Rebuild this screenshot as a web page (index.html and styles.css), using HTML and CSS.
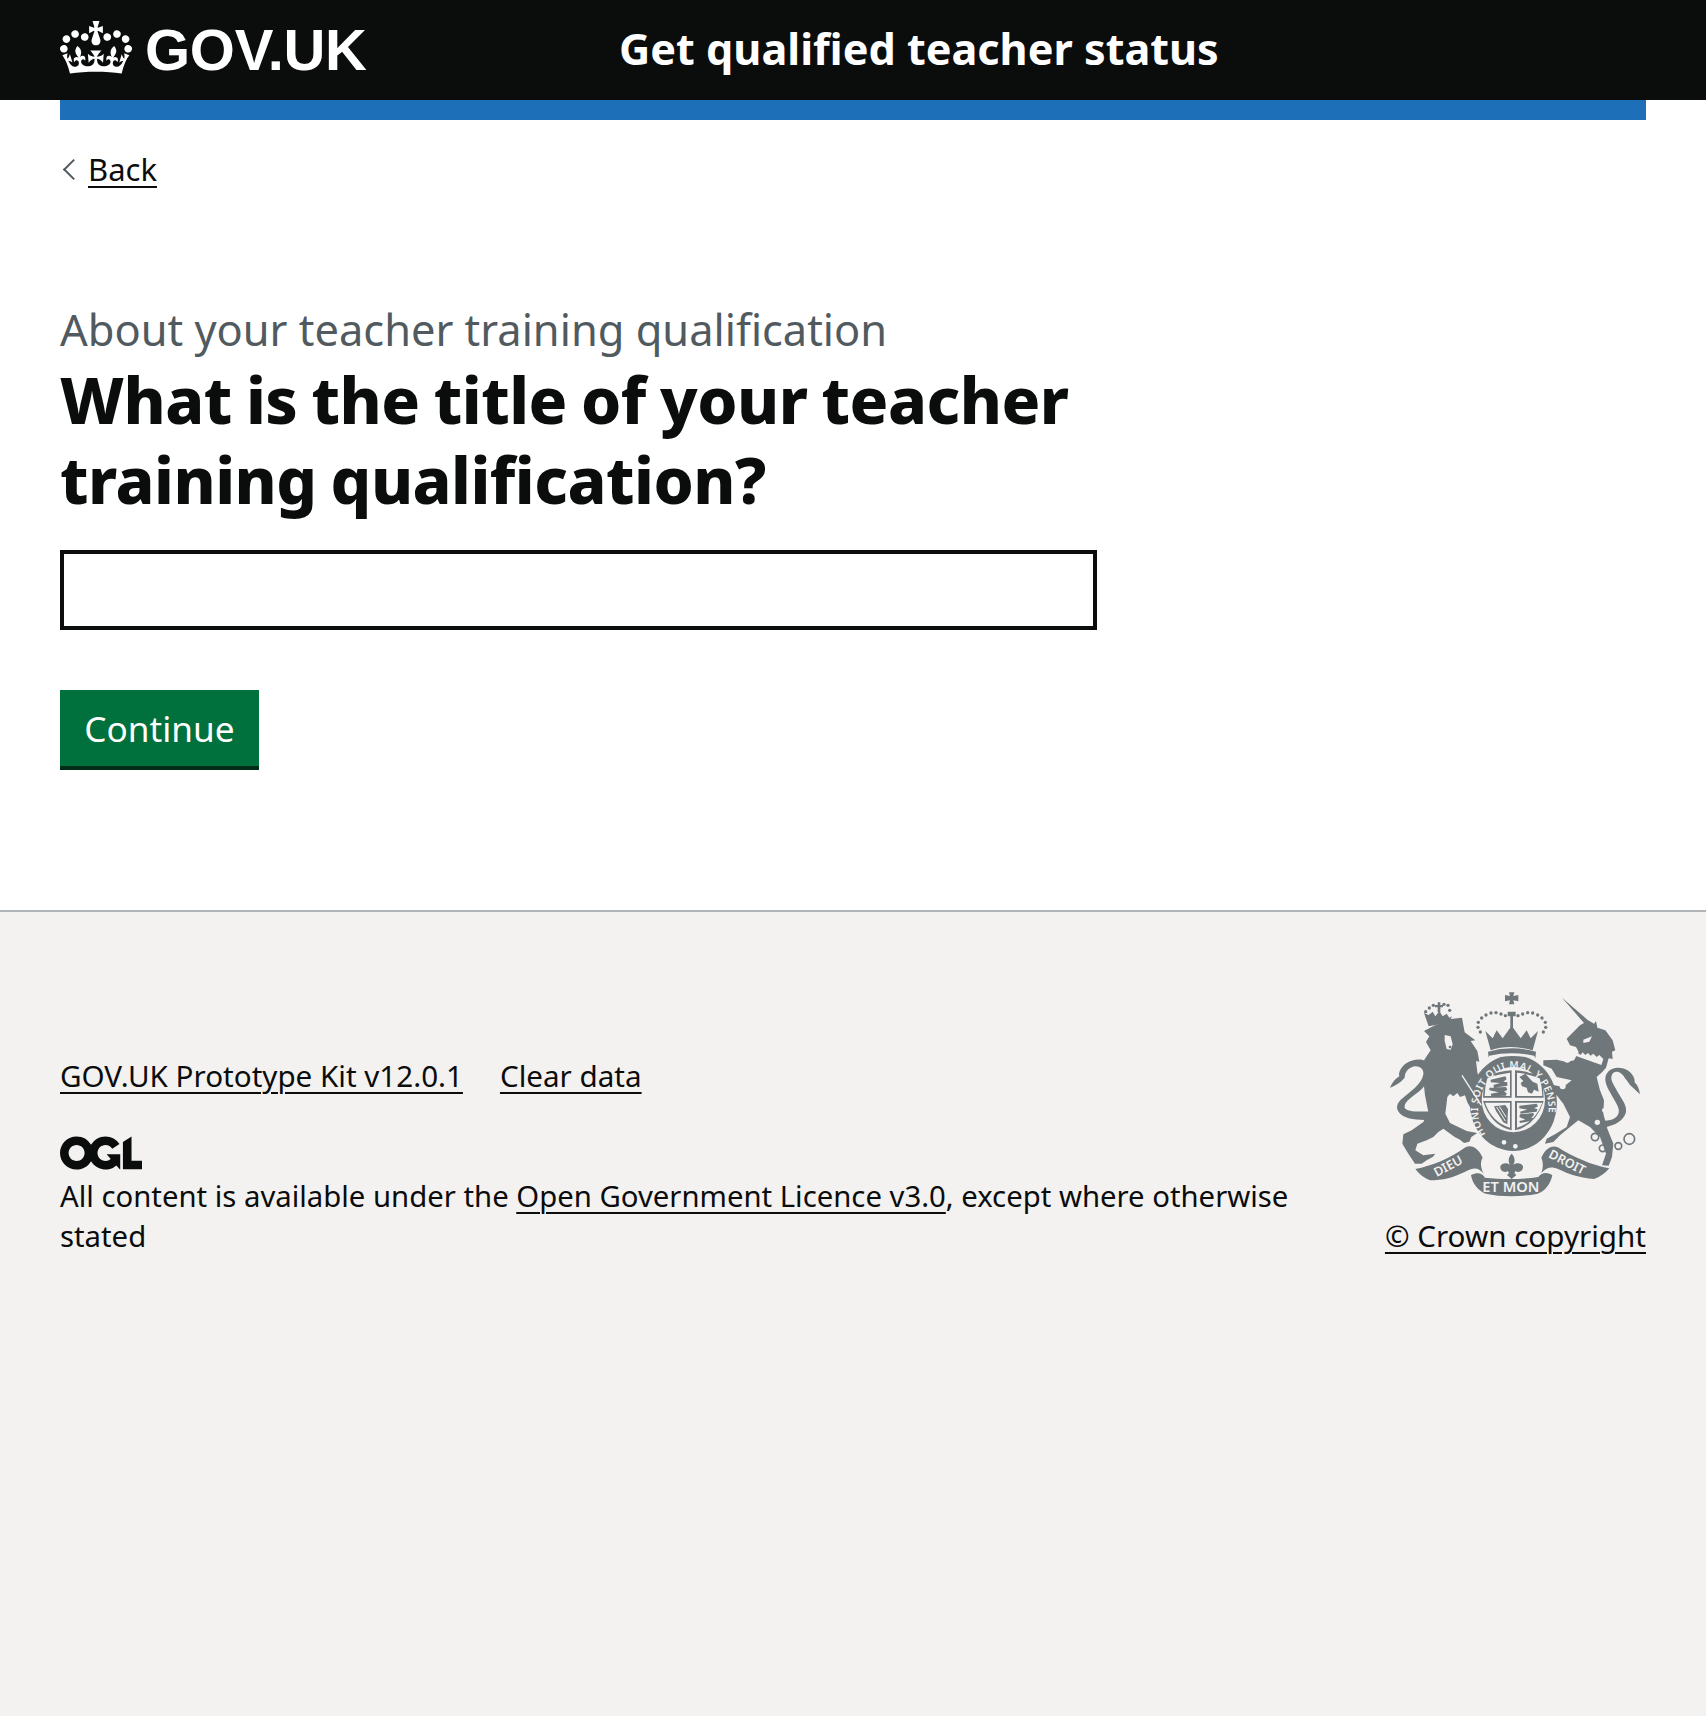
FILE: index.html
```html
<!DOCTYPE html>
<html lang="en">
<head>
<meta charset="utf-8">
<title>Get qualified teacher status</title>
<link rel="stylesheet" href="styles.css">
</head>
<body>
<header class="header">
  <div class="container header-inner">
    <a class="logo" href="#">
      <svg class="crown" xmlns="http://www.w3.org/2000/svg" viewBox="0 0 132 97" aria-hidden="true"><path fill="currentColor" fill-rule="evenodd" d="M25 30.2c3.5 1.5 7.7-.2 9.1-3.7 1.5-3.6-.2-7.8-3.9-9.2-3.6-1.4-7.6.3-9.1 3.9-1.4 3.5.3 7.5 3.9 9zM9 39.5c3.6 1.5 7.8-.2 9.2-3.7 1.5-3.6-.2-7.8-3.9-9.1-3.6-1.5-7.6.2-9.1 3.8-1.4 3.5.3 7.5 3.8 9zM4.4 57.2c3.5 1.5 7.7-.2 9.1-3.8 1.5-3.6-.2-7.7-3.9-9.1-3.5-1.5-7.6.3-9.1 3.8-1.4 3.5.3 7.6 3.9 9.1zm38.3-21.4c3.5 1.5 7.7-.2 9.1-3.8 1.5-3.6-.2-7.7-3.9-9.1-3.6-1.5-7.6.3-9.1 3.8-1.3 3.6.4 7.7 3.9 9.1zm64.4-5.6c-3.6 1.5-7.8-.2-9.1-3.7-1.5-3.6.2-7.8 3.8-9.2 3.6-1.4 7.7.3 9.2 3.9 1.3 3.5-.4 7.5-3.9 9zm15.9 9.3c-3.6 1.5-7.7-.2-9.1-3.7-1.5-3.6.2-7.8 3.7-9.1 3.6-1.5 7.7.2 9.2 3.8 1.5 3.5-.3 7.5-3.8 9zm4.7 17.7c-3.6 1.5-7.8-.2-9.2-3.8-1.5-3.6.2-7.7 3.9-9.1 3.6-1.5 7.7.3 9.2 3.8 1.3 3.5-.4 7.6-3.9 9.1zM89.3 35.8c-3.6 1.5-7.8-.2-9.2-3.8-1.4-3.6.2-7.7 3.9-9.1 3.6-1.5 7.7.3 9.2 3.8 1.4 3.6-.3 7.7-3.9 9.1zM69.7 17.7l8.9 4.7V9.3l-8.9 2.8c-.2-.3-.5-.6-.9-.9L72.4 0H59.6l3.5 11.2c-.3.3-.6.5-.9.9l-8.8-2.8v13.1l8.8-4.7c.3.3.6.7.9.9l-5 15.4v.1c-.2.8-.4 1.6-.4 2.4 0 4.1 3.1 7.5 7 8.1h.2c.3 0 .7.1 1 .1.4 0 .7 0 1-.1h.2c4-.6 7.1-4.1 7.1-8.1 0-.8-.1-1.7-.4-2.4V34l-5.1-15.4c.4-.2.7-.6 1-.9zM66 92.8c16.9 0 32.8 1.1 47.1 3.2 4-16.9 8.9-26.7 14-33.5l-9.6-3.4c1 4.9 1.1 7.2 0 10.2-1.5-1.4-3-4.3-4.2-8.7L108.6 76c2.8-2 5-3.2 7.5-3.3-4.4 9.4-10 11.9-13.6 11.2-4.3-.8-6.3-4.6-5.6-7.9 1-4.7 5.7-5.9 8-.5 4.3-8.7-3-11.4-7.6-8.8 7.1-7.2 7.9-13.5 2.1-21.1-8 6.1-8.1 12.3-4.5 20.8-4.7-5.4-12.1-2.5-9.5 6.2 3.4-5.2 7.9-2 7.2 3.1-.6 4.3-6.4 7.8-13.5 7.2-10.3-.9-10.9-8-11.2-13.8 2.5-.5 7.1 1.8 11 7.3L80.2 60c-4.1 4.4-8 5.3-12.3 5.4 1.4-4.4 8-11.6 8-11.6H55.5s6.4 7.2 7.9 11.6c-4.2-.1-8-1-12.3-5.4l1.4 16.4c3.9-5.5 8.5-7.7 10.9-7.3-.3 5.8-.9 12.8-11.1 13.8-7.2.6-12.9-2.9-13.5-7.2-.7-5 3.8-8.3 7.1-3.1 2.7-8.7-4.6-11.6-9.4-6.2 3.7-8.5 3.6-14.7-4.6-20.8-5.8 7.6-5 13.9 2.2 21.1-4.7-2.6-11.9.1-7.7 8.8 2.3-5.5 7.1-4.2 8.1.5.7 3.3-1.3 7.1-5.7 7.9-3.5.7-9-1.8-13.5-11.2 2.5.1 4.7 1.3 7.5 3.3l-4.7-15.4c-1.2 4.4-2.7 7.2-4.3 8.7-1.1-3-.9-5.3 0-10.2l-9.5 3.4c5 6.9 9.9 16.7 14 33.5 14.8-2.1 30.8-3.2 47.7-3.2z"/></svg>
      <span class="logotype">GOV.UK</span>
    </a>
    <a class="service" href="#">Get qualified teacher status</a>
  </div>
</header>
<div class="container">
  <div class="bar"></div>
  <a class="back" href="#"><span class="chevron"></span><span class="back-text">Back</span></a>
  <main class="main">
    <span class="caption">About your teacher training qualification</span>
    <h1 class="title">What is the title of your teacher training qualification?</h1>
    <input class="input" type="text" aria-label="What is the title of your teacher training qualification?">
    <button class="button" type="button">Continue</button>
  </main>
</div>
<footer class="footer">
  <div class="container footer-inner">
    <div class="meta">
      <ul class="links">
        <li><a href="#">GOV.UK Prototype Kit v12.0.1</a></li>
        <li><a href="#">Clear data</a></li>
      </ul>
      <svg class="ogl" xmlns="http://www.w3.org/2000/svg" viewBox="0 0 483.2 195.7" aria-hidden="true"><path fill="currentColor" d="M421.5 142.8V.1l-50.7 32.3v161.1h112.4v-50.7zm-122.3-9.6A47.12 47.12 0 0 1 221 97.8c0-26 21.1-47.1 47.1-47.1 16.7 0 31.4 8.7 39.7 21.8l42.7-27.2A97.63 97.63 0 0 0 268.1 0c-36.5 0-68.3 20.1-85.1 49.7A98 98 0 0 0 97.8 0C43.9 0 0 43.9 0 97.8s43.9 97.8 97.8 97.8c36.5 0 68.3-20.1 85.1-49.7a97.76 97.76 0 0 0 149.6 25.4l19.4 22.2h3v-87.8h-80l24.3 27.5zM97.8 145c-26 0-47.1-21.1-47.1-47.1s21.1-47.1 47.1-47.1 47.2 21 47.2 47S123.8 145 97.8 145"/></svg>
      <p class="licence">All content is available under the <a href="#">Open Government Licence v3.0</a>, except where otherwise stated</p>
    </div>
    <div class="copyright">
      <svg class="arms" xmlns="http://www.w3.org/2000/svg" viewBox="60 35 750 615" aria-hidden="true">
        <defs>
          <path id="garter-arc" d="M347 462A106 122 0 1 1 513 462"/>
        </defs>
        <g class="arms-fill">
          <!-- lion tail -->
          <path d="M190 418C150 420 100 420 84 392c-10-20 8-34 28-50 22-18 44-36 48-60 3-20-20-30-38-20-12 6-18 18-18 30-8 10-22 22-44 30 6-14 14-26 28-34-4-12 6-30 22-40 22-14 58-16 70 8 12 26-8 56-34 78-14 12-46 30-42 48 4 12 46 14 86 10z"/>
          <!-- lion body, mane and hind legs -->
          <path d="M162 152L192 136 242 116 276 112 284 156 316 180 302 182 322 212 328 244 318 242 322 276 328 300 340 322 364 358 382 376 380 392 360 392 340 384 318 386 300 380 292 366 285 345 270 350 262 338 250 348 240 340 232 350 226 400 240 428 290 452 322 458 304 470 298 484 282 488 270 478 254 470 220 445 205 455 190 470 170 480 142 490 136 510 160 525 196 520 188 530 170 540 155 550 135 550 115 520 97 490 100 462 125 450 160 425 175 395 165 345 160 300 178 265 162 240 182 210 168 185 178 168z"/>
          <!-- lion crown -->
          <path d="M176 138l-14-40 14 6 12-10 8 14 12-16 10 16 12-8 8 12 8-4-4 8-2 10z"/>
          <path d="M203 66h8v8h8v7h-8v14h-8V81h-8v-7h8z"/>
          <circle cx="167" cy="94" r="5"/><circle cx="178" cy="83" r="5"/><circle cx="190" cy="75" r="5"/><circle cx="222" cy="72" r="5"/><circle cx="234" cy="75" r="5"/><circle cx="239" cy="90" r="5"/>
          <!-- royal crown -->
          <path d="M346 152l22 22 12-24 18 24 27-38 27 38 18-24 12 24 22-22-16 58q-68-20-126 0z"/>
          <path d="M354 214q72-20 144 0l-2 20q-70-18-140 0z"/>
          <path d="M413 94h24v14h-8v40h-8v-40h-8zM417 36h16l-3 11 15-3v19l-15-3 3 12h-16l3-12-15 3V44l15 3z"/>
          <circle cx="331" cy="155" r="5"/><circle cx="324" cy="141" r="5"/><circle cx="325" cy="126" r="5"/><circle cx="335" cy="113" r="5"/><circle cx="348" cy="104" r="5"/><circle cx="363" cy="98" r="5"/><circle cx="378" cy="97" r="5"/><circle cx="393" cy="101" r="5"/><circle cx="406" cy="106" r="5"/>
          <circle cx="444" cy="106" r="5"/><circle cx="458" cy="101" r="5"/><circle cx="473" cy="97" r="5"/><circle cx="488" cy="98" r="5"/><circle cx="503" cy="104" r="5"/><circle cx="516" cy="113" r="5"/><circle cx="526" cy="126" r="5"/><circle cx="527" cy="141" r="5"/><circle cx="520" cy="155" r="5"/>
          <!-- unicorn tail -->
          <path d="M690 442c34-2 64-14 76-40 8-20-6-40-20-62-10-18-24-38-22-50 2-16 18-20 30-10 8 6 10 14 16 20l10 14 30 28c-2-14-6-26-16-36 2-14-12-36-36-42-30-8-54 10-52 36 2 24 28 56 38 80 8 20-4 34-20 38-14 4-26 4-36 2z"/>
          <!-- unicorn horn, head, body and legs -->
          <path d="M576 52L652 118 672 130 678 122 682 142 706 150 728 180 736 210 726 214 728 236 716 234 708 262 696 276 680 290 690 330 702 360 700 400 712 445 730 490 726 530 716 556 696 555 708 520 690 470 660 440 625 420 600 440 570 465 550 485 525 490 530 475 555 462 590 440 600 410 580 370 560 345 540 335 530 310 580 320 605 300 560 290 545 265 520 255 520 240 560 238 590 245 612 240 626 215 618 200 600 195 590 175 610 155 630 135 642 128z"/>
          <!-- ribbons -->
          <path d="M136 566c48-10 106-32 148-64 22-12 42 4 54 30-8 12-6 32 4 50-14-20-30-22-52-10-40 20-72 28-110 28-18-8-32-18-44-34z"/>
          <path d="M514 532c12-26 30-40 52-30 44 28 100 52 152 62-14 16-28 26-46 32-42-4-70-12-108-30-20-8-32-6-50 12 6-16 6-32 0-46z"/>
          <path d="M303 584c20-10 34-6 42 8 50 6 110 6 160-2 10-14 26-16 42-6-4 24-22 50-44 56-50 10-110 10-156 0-22-8-40-30-44-56z"/>
          <!-- garter -->
          <ellipse cx="430" cy="368" rx="131" ry="144"/>
          <!-- fleur-de-lis -->
          <path d="M425 520c10 10 12 24 4 34 8-8 26-8 30 4 2 14-14 22-22 14l-4 6 6 6-14 12-14-12 6-6-4-6c-8 8-24 0-22-14 4-12 22-12 30-4-8-10-6-24 4-34z"/>
        </g>
        <g class="arms-light">
          <ellipse cx="430" cy="358" rx="95" ry="98"/>
          <circle cx="402" cy="486" r="7"/><circle cx="436" cy="498" r="7"/>
          <!-- details cut from the supporters -->
          <circle cx="592" cy="238" r="9"/><circle cx="578" cy="318" r="9"/><circle cx="712" cy="345" r="10"/><circle cx="703" cy="390" r="7"/><circle cx="682" cy="426" r="8"/>
          <path d="M618 224l6-6 8 6 6-8 8 8 8-6 8 8 8-6 10 10 8-6 12 12-6 18-84-30z"/>
          <path d="M224 164l18 4 6 24-6 16-12-2-6-24zM640 178l26-10-8 16-18 4z"/>
          <path d="M352 236q72-18 146 0l-6-10q-66-14-134 0z"/>
        </g>
        <g class="arms-fill">
          <circle cx="240" cy="200" r="4"/>
          <path d="M346 290q38-18 79-20v82h-86q0-32 7-62zM435 270q41 2 79 20 7 30 7 62h-86zM339 362h86v88q-62-14-86-88zM435 362h86q-24 74-86 88z"/>
        </g>
        <g class="arms-light">
          <path d="M352 294q34-14 68-17v70h-76q0-26 8-53zM441 277q34 3 68 17 8 27 8 53h-76zM345 367h75v75q-54-16-75-75zM441 367h76q-21 59-76 75z"/>
        </g>
        <g class="arms-fill">
          <path d="M362 298l44-10 4 8-10 8 12 2 0 10-40 6-2-8 20-6-28-2zM358 322l50-2 4 8-10 6 8 4-2 8-44 2-2-8 24-4-28-6z"/>
          <path d="M448 290l18-10 22 24 14 6 4 24-14-6-6 12-12-4-4-14-14-4-4-10 8-6z"/>
          <path d="M448 376l52-6 4 8-12 6 10 2-2 8-48 6-2-6 22-6-24-4zM450 402l40-4 2 6-8 8 6 2-6 8-34 6-2-6 18-4-18-8z"/>
          <path d="M372 378l34-4 8 12-2 46-12-6-22-34z"/>
        </g>
        <path d="M380 380l26 42M388 378l20 32M372 392l22 32" class="arms-hatch"/>
        <path d="M276 285l58 90" class="arms-sword"/>
        <g class="arms-rings">
          <circle cx="675" cy="470" r="11"/><circle cx="698" cy="504" r="10"/><circle cx="745" cy="497" r="10"/><circle cx="778" cy="476" r="16"/>
        </g>
        <text class="arms-text garter-text"><textPath href="#garter-arc">HONI SOIT QUI MAL Y PENSE</textPath></text>
        <text class="arms-text ribbon-side" transform="translate(200 590) rotate(-28)">DIEU</text>
        <text class="arms-text ribbon-side" transform="translate(533 530) rotate(27)">DROIT</text>
        <text class="arms-text" x="337" y="635">ET MON</text>
      </svg>
      <a href="#">© Crown copyright</a>
    </div>
  </div>
</footer>
</body>
</html>
```

FILE: styles.css
```css
* { box-sizing: border-box; }
html, body { height: 100%; }
body {
  margin: 0;
  display: flex;
  flex-direction: column;
  min-height: 1716px;
  background: #fff;
  color: #0b0c0c;
  font-family: "Noto Sans", Arial, sans-serif;
}
a { color: inherit; }
.container { margin: 0 60px; }
.header { background: #0b0c0c; height: 100px; color: #fff; }
.header-inner { display: flex; height: 100px; align-items: center; }
.logo { display: flex; align-items: center; width: 559px; color: #fff; text-decoration: none; }
.crown { width: 72px; height: 53px; margin: -6px 13px 0 0; }
.logotype { font-family: "Liberation Sans", Arial, sans-serif; font-weight: 700; font-size: 58px; line-height: 60px; letter-spacing: -0.3px; }
.service { font-size: 43.2px; font-weight: 700; color: #fff; text-decoration: none; line-height: 58px; padding-bottom: 2px; }
.bar { height: 20px; background: #1d70b8; }
.back { display: inline-flex; align-items: center; margin-top: 31px; font-size: 31px; line-height: 36px; text-decoration: none; }
.chevron { width: 15px; height: 15px; border-left: 2px solid #505a5f; border-bottom: 2px solid #505a5f; transform: rotate(45deg); margin: 0 7px 0 6px; }
.back-text { text-decoration: underline; text-underline-offset: 5px; text-decoration-thickness: 2px; }
.main { display: block; padding-top: 117px; padding-bottom: 140px; }
.caption { display: block; color: #505a5f; font-size: 43.4px; line-height: 54px; margin: -1px 0 3px; }
.title { width: 1044px; margin: 0 0 30px; font-size: 64px; line-height: 80px; font-weight: 800; letter-spacing: -0.5px; word-spacing: -2px; }
.input { display: block; width: 1037px; height: 80px; border: 4px solid #0b0c0c; border-radius: 0; margin: 0 0 60px; background: #fff; }
.button { display: block; width: 199px; height: 80px; border: 0; padding: 0 0 4px; background: #00703c; color: #fff; font: 400 35.2px/40px "Noto Sans", Arial, sans-serif; box-shadow: inset 0 -4px 0 #002d18; }
.footer { flex: 1; background: #f3f2f1; border-top: 2px solid #b1b4b6; padding-top: 80px; font-size: 29.6px; line-height: 40px; }
.footer-inner { display: flex; justify-content: space-between; align-items: flex-end; }
.meta { width: 1240px; padding-bottom: 1px; }
.links { display: flex; gap: 37px; list-style: none; margin: 0 0 40px; padding: 0; }
.footer a { text-underline-offset: 5px; text-decoration-thickness: 2px; }
.ogl { display: block; width: 82px; height: 34px; margin-bottom: 6px; color: #0b0c0c; }
.licence { margin: 0; font-size: 29.3px; }
.copyright { display: flex; flex-direction: column; align-items: flex-end; padding-bottom: 1px; }
.arms { display: block; width: 250px; height: 205px; margin-bottom: 19px; margin-right: 6px; }
.arms-fill { fill: #6f777b; }
.arms-light { fill: #f3f2f1; }
.arms-hatch { stroke: #f3f2f1; stroke-width: 3; fill: none; }
.arms-sword { stroke: #f3f2f1; stroke-width: 4; fill: none; }
.arms-rings { fill: none; stroke: #6f777b; stroke-width: 5; }
.arms-text { fill: #f3f2f1; font-family: "Noto Sans", Arial, sans-serif; font-weight: 600; font-size: 44px; }
.ribbon-side { font-size: 38px; }
.garter-text { font-size: 30px; letter-spacing: 1.2px; }
```
